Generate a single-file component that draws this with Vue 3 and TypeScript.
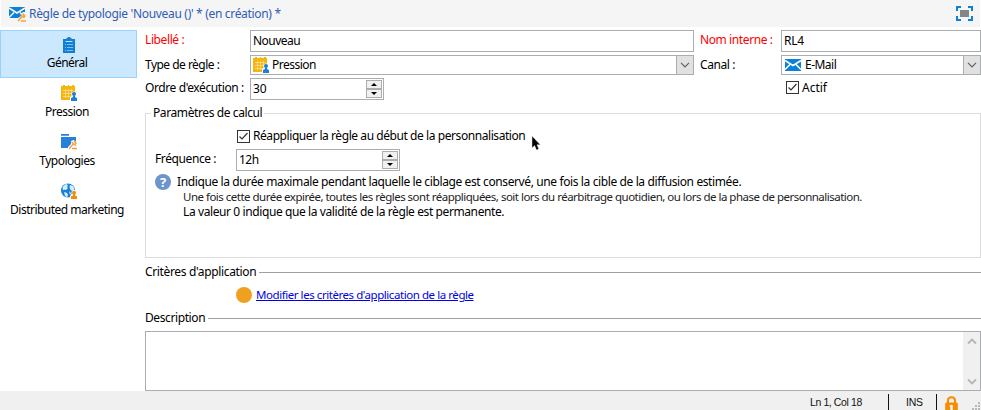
<script setup lang="ts">
import { ref } from 'vue'

type IconName = 'clipboard' | 'calendar' | 'folder' | 'globe'

interface NavItem {
  label: string
  icon: IconName
}

const navItems: NavItem[] = [
  { label: 'Général', icon: 'clipboard' },
  { label: 'Pression', icon: 'calendar' },
  { label: 'Typologies', icon: 'folder' },
  { label: 'Distributed marketing', icon: 'globe' },
]
const selected = ref<number>(0)
const active = ref<boolean>(true)
const reapply = ref<boolean>(true)
</script>

<template>
  <svg class="defs" width="0" height="0" aria-hidden="true">
    <symbol id="clipboard" viewBox="0 0 16 16">
      <path fill="#0f7fd6" d="M2 2h3.500V1h1.200V0h2.600v1h1.200v1H14v14H2z" />
      <path stroke="#c5e3fa" stroke-width="1" d="M4.500 4.500h7" />
      <path stroke="#7dbdf0" stroke-width="1" d="M4 7.500h1m1 0h6M4 10.500h1m1 0h6M4 13.500h1m1 0h6" />
    </symbol>
    <symbol id="calendar" viewBox="0 0 16 16">
      <path fill="#f5b50c" d="M0 1h2V0h2v1h3V0h1v1h3V0h2v1h1v14H0z" />
      <path stroke="#fff" stroke-width=".7" opacity=".65" d="M2 5.500h10M2 8.500h9M2 11.500h7M4.500 4v9M7.500 4v9M10.500 4v5" />
      <path fill="#fff" d="M9 16v-4l1.500-1V8l2-1.500h2L16 8v8z" />
      <circle cx="13" cy="9" r="2" fill="#1c7fd6" />
      <path fill="#1c7fd6" d="M12 10.500h2V12l2 1v3h-6v-3l2-1z" />
    </symbol>
    <symbol id="folder" viewBox="0 0 16 16">
      <path fill="#2680d9" d="M0 0h8v1.800H0zM0 3h15v11H0z" />
      <path fill="#fff" d="M7 16v-3l3-3V7l3-1 3 3v7z" />
      <path stroke="#f2a040" stroke-width="1.400" d="M8 14.800l4.500-5M10.500 8l4.500 3.700M13 7l2.500 3M11 14.500h5" fill="none" />
    </symbol>
    <symbol id="globe" viewBox="0 0 16 16">
      <circle cx="7" cy="7.500" r="7" fill="#1680d6" />
      <path fill="#d9efff" d="M1.500 4L5 1l2 1-1 2 1 1-2 2-2-.5-1 1zM9 2l3 1 1.500 3-2 2-2-1-1-3zM3 9l3 1 1 2-1 2.500-2-2zM8 8l2 2-1 2z" />
      <path fill="#fff" d="M9 16v-3l1.500-2V8.500l2-1.500h2L16 8v8z" />
      <circle cx="13" cy="9.700" r="2" fill="#f58b0a" />
      <path fill="#f58b0a" d="M12 11h2v1.500l2 .8V16h-6v-2.700l2-.8z" />
    </symbol>
    <symbol id="mail" viewBox="0 0 16 12">
      <path fill="#0d80d8" d="M0 0h16v12H0z" />
      <path fill="none" stroke="#fff" stroke-width="1.500" d="M0 1.500l8 5 8-5M0 10.500l5-5M16 10.500l-5-5" />
    </symbol>
  </svg>

  <div class="window">
    <header class="titlebar">
      <svg class="title-icon" viewBox="0 0 17 16">
        <path fill="#0d80d8" d="M0 1h16v11H0z" />
        <path fill="none" stroke="#f5f5f5" stroke-width="1.500" d="M0 2l8 5 8-5M0 11.500l5-5M16 11.500l-5-5" />
        <path fill="#f5f5f5" d="M8 16l1-4 3-2V8l2-2h3v10z" />
        <path stroke="#f5a33a" stroke-width="1.600" fill="none" d="M9 15l4.500-5M11.500 8.500l4 3.500M14 7.500l2 3.500M12 15h5" />
      </svg>
      <span class="title">Règle de typologie 'Nouveau ()' * (en création) *</span>
      <svg class="expand" viewBox="0 0 17 15">
        <path fill="none" stroke="#0d80d8" stroke-width="2" d="M1 5V1h4M12 1h4v4M16 10v4h-4M5 14H1v-4" />
        <path fill="#858585" d="M4 4h9v7H4z" />
      </svg>
    </header>

    <div class="body">
      <nav class="sidebar">
        <button
          v-for="(item, i) in navItems"
          :key="item.label"
          type="button"
          class="nav"
          :class="{ selected: selected === i }"
          @click="selected = i"
        >
          <svg class="icon16"><use :href="'#' + item.icon" /></svg>
          <span>{{ item.label }}</span>
        </button>
      </nav>

      <main class="form">
        <div class="fields">
          <label class="required">Libellé :</label>
          <div class="box snug">Nouveau</div>
          <label class="required second">Nom interne :</label>
          <div class="box code">RL4</div>

          <label class="snug">Type de règle :</label>
          <div class="box combo">
            <svg class="icon16"><use href="#calendar" /></svg>
            <span class="value snug">Pression</span>
            <span class="drop"><svg viewBox="0 0 10 6"><path d="M1 .8l4 4 4-4" /></svg></span>
          </div>
          <label class="second">Canal :</label>
          <div class="box combo">
            <svg class="mail"><use href="#mail" /></svg>
            <span class="value snug">E-Mail</span>
            <span class="drop"><svg viewBox="0 0 10 6"><path d="M1 .8l4 4 4-4" /></svg></span>
          </div>

          <label>Ordre d'exécution :</label>
          <div class="box spin order">
            <span class="value number">30</span>
            <span class="arrows">
              <i><svg viewBox="0 0 6 3"><path d="M0 3l3-3 3 3z" /></svg></i>
              <i><svg viewBox="0 0 6 3"><path d="M0 0l3 3 3-3z" /></svg></i>
            </span>
          </div>
          <span></span>
          <div class="check actif" @click="active = !active">
            <span class="tick"><svg v-if="active" viewBox="0 0 11 11"><path d="M1.500 5.500l2.500 2.500 5.500-6" /></svg></span>
            <span>Actif</span>
          </div>
        </div>

        <fieldset class="group">
          <legend>Paramètres de calcul</legend>
          <div class="check reapply" @click="reapply = !reapply">
            <span class="tick"><svg v-if="reapply" viewBox="0 0 11 11"><path d="M1.500 5.500l2.500 2.500 5.500-6" /></svg></span>
            <span>Réappliquer la règle au début de la personnalisation</span>
            <svg class="cursor" viewBox="0 0 10 16">
              <path d="M1 1v12l2.600-2.400L5.500 15l2.300-1L6 9.800h3.300z" />
            </svg>
          </div>
          <div class="freq">
            <label>Fréquence :</label>
            <div class="box spin">
              <span class="value snug">12h</span>
              <span class="arrows">
                <i><svg viewBox="0 0 6 3"><path d="M0 3l3-3 3 3z" /></svg></i>
                <i><svg viewBox="0 0 6 3"><path d="M0 0l3 3 3-3z" /></svg></i>
              </span>
            </div>
          </div>
          <div class="help">
            <span class="qmark">?</span>
            <div class="lines">
              <p class="lead">Indique la durée maximale pendant laquelle le ciblage est conservé, une fois la cible de la diffusion estimée.</p>
              <p class="sub light">Une fois cette durée expirée, toutes les règles sont réappliquées, soit lors du réarbitrage quotidien, ou lors de la phase de personnalisation.</p>
              <p class="sub">La valeur 0 indique que la validité de la règle est permanente.</p>
            </div>
          </div>
        </fieldset>

        <h2 class="section criteria-title">Critères d'application</h2>
        <div class="criteria">
          <span class="dot"></span>
          <a>Modifier les critères d'application de la règle</a>
        </div>
        <h2 class="section description">Description</h2>
        <div class="textarea">
          <div class="scroll">
            <svg viewBox="0 0 10 7"><path d="M1 5.500l4-4 4 4" /></svg>
            <svg viewBox="0 0 10 7"><path d="M1 1.500l4 4 4-4" /></svg>
          </div>
        </div>
      </main>
    </div>

    <footer class="status">
      <span class="pos">Ln 1, Col 18</span>
      <span class="ins">INS</span>
      <svg class="lock" viewBox="0 0 14 16">
        <path fill="none" stroke="#f98b00" stroke-width="2.200" d="M3.200 8V4.500a3.800 3.300 0 0 1 7.600 0V8" />
        <path fill="#f98b00" d="M1 7h12l.8 1v8H.2V8z" />
        <path fill="#fff" d="M5.500 9.500h2.800V15H5.800v-3.500h-.9z" />
      </svg>
      <svg class="grip" viewBox="0 0 9 9">
        <path fill="#b8b8b8" d="M7 1h2v2H7zM4 4h2v2H4zM7 4h2v2H7zM1 7h2v2H1zM4 7h2v2H4zM7 7h2v2H7z" />
      </svg>
    </footer>
  </div>
</template>

<style>
body {
  margin: 0;
  overflow: hidden;
  background: #fff;
}
</style>

<style scoped>
* {
  box-sizing: border-box;
}
.defs {
  display: block;
}
.window {
  width: 981px;
  height: 410px;
  display: flex;
  flex-direction: column;
  font: 12px/16px "Noto Sans", "Open Sans", sans-serif;
  letter-spacing: -0.4px;
  color: #000;
  white-space: nowrap;
  overflow: hidden;
}
.snug {
  letter-spacing: -0.52px;
}
.titlebar {
  height: 27px;
  margin: 0 1px;
  padding: 0 7px 0 8px;
  display: flex;
  align-items: center;
  flex: none;
  background: #f5f5f5;
  color: #2f5cb8;
  letter-spacing: -0.32px;
}
.title-icon {
  width: 17px;
  height: 16px;
  margin-right: 3px;
}
.expand {
  width: 17px;
  height: 15px;
  margin-left: auto;
}
.body {
  height: 364px;
  padding-top: 3px;
  display: flex;
  flex: none;
}
.sidebar {
  width: 145px;
  display: flex;
  flex-direction: column;
}
.nav {
  width: 137px;
  height: 49px;
  padding: 5px 3px 0 0;
  display: flex;
  flex-direction: column;
  align-items: center;
  border: 1px solid transparent;
  background: none;
  font: inherit;
  letter-spacing: -0.52px;
  color: inherit;
}
.nav span {
  margin-top: 3px;
}
.nav .icon16 {
  position: relative;
  left: 2px;
}
.nav.selected {
  height: 48px;
  margin-bottom: 1px;
  padding-top: 6px;
  background: #cce8ff;
  border-color: #99d1ff;
}
.nav.selected span {
  margin-top: 2px;
}
.icon16 {
  width: 16px;
  height: 16px;
  flex: none;
}
.form {
  width: 836px;
  display: flex;
  flex-direction: column;
}
.fields {
  display: grid;
  grid-template-columns: 105px 444px 87px 200px;
  grid-template-rows: 22px 20px 22px;
  row-gap: 3px;
}
label {
  line-height: 20px;
}
label.second {
  padding-left: 6px;
}
.required {
  color: #f00;
}
.box {
  border: 1px solid #abadb3;
  background: #fff;
  padding-left: 2px;
  display: flex;
  align-items: center;
  min-width: 0;
}
.code {
  letter-spacing: -0.2px;
}
.number {
  letter-spacing: 0;
}
.combo .icon16 {
  margin-right: 3px;
}
.mail {
  width: 16px;
  height: 12px;
  margin: 0 4px 0 1px;
}
.value {
  flex: 1;
}
.drop {
  width: 17px;
  height: 18px;
  display: flex;
  align-items: center;
  justify-content: center;
  background: #e1e1e1;
  border-left: 1px solid #adadad;
}
.drop svg {
  width: 10px;
  height: 6px;
}
.drop path,
.scroll path {
  fill: none;
  stroke: #606060;
  stroke-width: 1.2;
}
.spin .arrows {
  width: 16px;
  height: 20px;
  margin-right: 1px;
  display: flex;
  flex-direction: column;
  padding: 1px 0;
}
.arrows i {
  flex: 1;
  display: flex;
  align-items: center;
  justify-content: center;
  border: 1px solid #adadad;
  background: #f0f0f0;
}
.arrows svg {
  width: 6px;
  height: 3px;
}
.order {
  width: 134px;
}
.check {
  display: flex;
  align-items: center;
}
.tick {
  width: 13px;
  height: 13px;
  margin-right: 3px;
  border: 1px solid #333;
  flex: none;
  display: flex;
}
.tick svg {
  width: 11px;
  height: 11px;
}
.tick path {
  fill: none;
  stroke: #333;
  stroke-width: 1.2;
}
.actif {
  padding: 0 0 3px 5px;
  letter-spacing: 0;
}
.group {
  height: 152px;
  margin: 6px 0 0;
  padding: 0;
  border: 1px solid #dcdcdc;
  min-width: 0;
}
legend {
  margin-left: 5px;
  padding: 0 2px;
  height: 14px;
  line-height: 14px;
}
.reapply {
  margin-top: 8px;
  padding-left: 91px;
  height: 16px;
  letter-spacing: -0.43px;
}
.cursor {
  width: 10px;
  height: 16px;
  margin: 14px 0 0 6px;
  flex: none;
}
.cursor path {
  fill: #000;
  stroke: #ddd;
  stroke-width: .5;
}
.freq {
  display: flex;
  margin-top: 5px;
}
.freq label {
  width: 90px;
  padding-left: 9px;
}
.freq .box {
  width: 164px;
  height: 22px;
}
.help {
  display: flex;
  margin-top: 3px;
  padding-left: 9px;
}
.qmark {
  width: 16px;
  height: 16px;
  border-radius: 50%;
  background: #6d95ca;
  color: #fff;
  font-weight: 700;
  font-size: 13px;
  letter-spacing: 0;
  text-align: center;
  line-height: 16px;
}
.lines {
  padding-left: 6px;
}
.lines p {
  margin: 0;
  height: 15px;
  line-height: 15px;
}
.lines .lead {
  letter-spacing: -0.386px;
}
.lines .sub {
  padding-left: 6px;
}
.lines .light {
  color: #222;
  font-size: 11.5px;
  letter-spacing: -0.51px;
}
.section {
  margin: 6px 0 0;
  height: 16px;
  font: inherit;
  display: flex;
  align-items: center;
  gap: 3px;
}
.section::after {
  content: "";
  flex: 1;
  height: 1px;
  background: #a0a0a0;
}
.criteria-title {
  letter-spacing: -0.35px;
}
.criteria {
  height: 16px;
  margin-top: 7px;
  padding-left: 91px;
  display: flex;
  align-items: center;
}
.dot {
  width: 16px;
  height: 16px;
  margin-right: 4px;
  border-radius: 50%;
  background: #f0a020;
}
a {
  color: #0000e6;
  font-size: 11.5px;
  letter-spacing: -0.44px;
  text-decoration: underline;
}
.section.description {
  margin-top: 7px;
}
.textarea {
  height: 60px;
  margin-top: 5px;
  border: 1px solid #abadb3;
  display: flex;
  justify-content: flex-end;
}
.scroll {
  width: 17px;
  padding: 6px 0 5px;
  display: flex;
  flex-direction: column;
  align-items: center;
  justify-content: space-between;
  background: #f0f0f0;
}
.scroll svg {
  width: 10px;
  height: 7px;
}
.scroll path {
  stroke: #b5b5b5;
  stroke-width: 1.8;
}
.status {
  height: 19px;
  display: flex;
  flex: none;
  justify-content: flex-end;
  background: #f0f0f0;
  font: 10.5px/17px "Liberation Sans", Arial, sans-serif;
  letter-spacing: 0;
  color: #111;
}
.pos {
  width: 111px;
  height: 16px;
  margin-top: 3px;
  border-right: 1px solid #111;
  padding-left: 32px;
  letter-spacing: -0.4px;
}
.ins {
  width: 48px;
  height: 16px;
  margin-top: 3px;
  border-right: 1px solid #111;
  padding-left: 17px;
  letter-spacing: -0.2px;
}
.lock {
  width: 13px;
  height: 15px;
  margin: 5px 13px 0 8px;
}
.grip {
  width: 9px;
  height: 9px;
  margin: 10px 1px 0 0;
}
</style>
